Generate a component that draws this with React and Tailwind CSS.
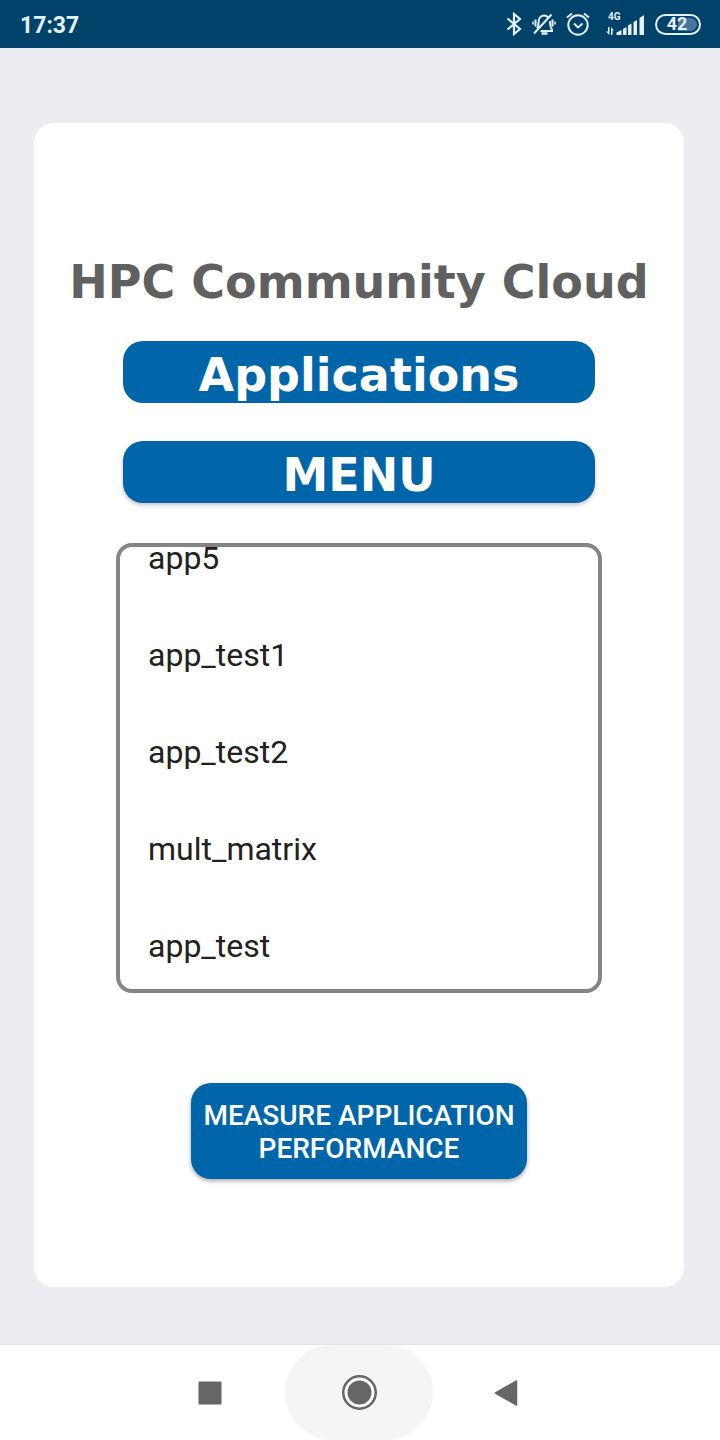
const apps = ['app5', 'app_test1', 'app_test2', 'mult_matrix', 'app_test'];

function StatusBar() {
  return (
    <header className="flex h-12 items-center justify-between bg-[#01426a] pr-[19px] pl-5 text-[#e3f1fb]">
      <time className="pt-1 text-[23px] leading-7 font-bold">17:37</time>
      <div className="flex items-center">
        <svg className="mr-2.5 h-6 w-4" viewBox="0 0 16 24" fill="none" stroke="currentColor" strokeWidth="2.2" aria-label="Bluetooth">
          <path d="M1.500 6.500 14 17 8 22V2l6 5L1.500 17.500" />
        </svg>
        <svg className="mr-2.5 h-6 w-6" viewBox="0 0 24 24" fill="none" stroke="currentColor" strokeWidth="2" aria-label="Muted">
          <path d="M5 16.500c1.500-1.500 1.500-3 1.500-6C6.500 6 9 3.500 12 3.500c2 0 3.600 1 4.500 2.500M18 9c0 4 0 6 2 8.500v1.500H8.500M2 21.500 19.500 2.500" />
          <path d="M9.500 21.500h6" strokeWidth="2.500" />
          <path d="M3.500 7.500v7M20.500 7.500v7" strokeWidth="2" />
          <path d="M1 9.500v3M23 9.500v3" strokeWidth="1.500" />
        </svg>
        <svg className="mr-4 h-6 w-6" viewBox="0 0 24 24" fill="none" stroke="currentColor" strokeWidth="2" aria-label="Alarm">
          <circle cx="12" cy="13" r="9.700" />
          <path d="m8 11.500 4 4 4.500-4M1 5.500l5-4M23 5.500l-5-4" />
        </svg>
        <div className="mr-[11px] flex w-[38px] flex-col">
          <span className="pl-0.5 text-[10px] leading-[8px] font-bold">4G</span>
          <svg className="-mt-1.5 h-5 w-[38px]" viewBox="0 0 38 20" fill="currentColor" aria-label="Signal">
            <path d="M2 12h1.500v8L0 16.500h2zM5 20v-8l3 3.500H6.500V20z" />
            <path d="M10.500 20v-2.500l5-2.500v5zM17 20v-6l3.500-2v8zM22 20v-9.500l3.500-2V20zM27.500 20V7l3.500-2v15zM33.500 20V3L38 0v20z" />
          </svg>
        </div>
        <div className="flex h-[21px] w-[46px] items-center rounded-full border-2 border-current p-0.5">
          <div className="flex h-full w-full items-center justify-center rounded-full bg-linear-to-r from-transparent from-50% to-[#47769a] to-50% pr-0.5 text-[18px] leading-4 font-bold">
            42
          </div>
        </div>
      </div>
    </header>
  );
}

function NavigationBar() {
  return (
    <nav className="flex h-24 shrink-0 items-center justify-center border-t border-[#e2e2e4] bg-white pr-0.5 text-[#666]">
      <button className="flex h-full w-[148px] items-center justify-center pr-0.5" aria-label="Recent apps">
        <svg className="h-6 w-6" viewBox="0 0 24 24" fill="currentColor">
          <rect x="0.500" y="0.500" width="23" height="23" rx="1" />
        </svg>
      </button>
      <button className="flex h-full w-[148px] items-center justify-center rounded-full bg-[#f5f5f5]" aria-label="Home">
        <svg className="h-9 w-9" viewBox="0 0 36 36">
          <circle cx="18.500" cy="17.500" r="16.250" fill="white" stroke="currentColor" strokeWidth="2.500" />
          <circle cx="18.500" cy="17.500" r="12" fill="currentColor" />
        </svg>
      </button>
      <button className="flex h-full w-[148px] items-center justify-center pr-0.5" aria-label="Back">
        <svg className="h-[26px] w-6" viewBox="0 0 24 26" fill="currentColor" stroke="currentColor" strokeWidth="1.500" strokeLinejoin="round">
          <path d="M1.500 13 22.500 1v24z" />
        </svg>
      </button>
    </nav>
  );
}

export default function App() {
  return (
    <div className="flex min-h-screen flex-col bg-[#edecf2] font-[Roboto,sans-serif]">
      <StatusBar />
      <main className="flex grow flex-col pt-[75px] pr-9 pb-[57px] pl-[34px]">
        <section className="flex grow flex-col items-center rounded-[20px] bg-white pt-32 pb-[108px]">
          <h1 className="text-center font-['DejaVu_Sans',sans-serif] text-[46px] leading-[62px] font-bold whitespace-nowrap text-[#606060]">
            HPC Community Cloud
          </h1>
          <h2 className="mt-7 h-[62px] w-[472px] max-w-full overflow-hidden rounded-[20px] bg-[#0065a9] text-center font-['DejaVu_Sans',sans-serif] text-[46px] leading-[68px] font-bold text-white">
            Applications
          </h2>
          <button className="mt-[38px] h-[62px] w-[472px] max-w-full rounded-[20px] bg-[#0065a9] text-center font-['DejaVu_Sans',sans-serif] text-[46px] leading-[68px] font-bold text-white shadow-[0_2px_4px_rgba(0,0,0,0.25)]">
            MENU
          </button>
          <div className="mt-10 h-[450px] w-[486px] max-w-full overflow-hidden rounded-2xl border-4 border-[#858585]">
            <ul className="-mt-[37px] flex flex-col gap-px">
              {apps.map((name) => (
                <li key={name}>
                  <button className="h-24 w-full px-7 text-left text-[32px] text-[#212121]">{name}</button>
                </li>
              ))}
            </ul>
          </div>
          <button className="mt-[90px] h-24 w-[336px] rounded-[20px] bg-[#0065a9] pt-0.5 text-center text-[28px] leading-[33px] font-medium text-white uppercase shadow-[0_2px_4px_rgba(0,0,0,0.35)]">
            Measure application performance
          </button>
        </section>
      </main>
      <NavigationBar />
    </div>
  );
}
